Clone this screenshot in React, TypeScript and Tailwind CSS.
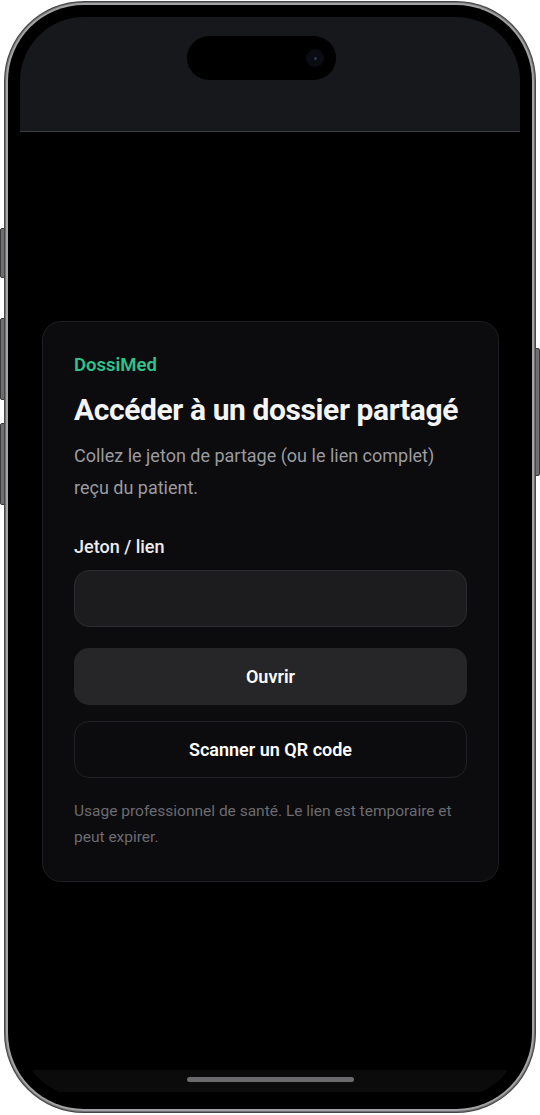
import React from "react";

export default function App() {
  return (
    <div className="relative w-[540px] h-[1115px] bg-white overflow-hidden" style={{ fontFamily: "Roboto, 'Noto Sans', sans-serif" }}>
      {/* side buttons */}
      <div className="absolute left-0 top-[228px] w-[6px] h-[50px] rounded-l-[2px] bg-[#6e6e70] border border-[#3a3a3a]" />
      <div className="absolute left-0 top-[318px] w-[6px] h-[82px] rounded-l-[2px] bg-[#6e6e70] border border-[#3a3a3a]" />
      <div className="absolute left-0 top-[423px] w-[6px] h-[82px] rounded-l-[2px] bg-[#6e6e70] border border-[#3a3a3a]" />
      <div className="absolute right-0 top-[348px] w-[6px] h-[128px] rounded-r-[2px] bg-[#6e6e70] border border-[#3a3a3a]" />

      <div className="relative mx-[4px] mt-[1px] h-[1112px] rounded-[80px] bg-[#444446] p-[1px]">
        <div className="h-full rounded-[79px] bg-[#707072] p-[1px]">
          <div className="h-full rounded-[78px] bg-[#a4a4a6] p-[2px]">
            <div className="h-full rounded-[76px] bg-black p-[12px]">
              <div className="h-full rounded-[64px] overflow-hidden bg-black flex flex-col">
                {/* status area */}
                <div className="h-[115px] shrink-0 bg-[#17181b] border-b border-[#3d3e42] flex items-start pl-[167px] pt-[19px]">
                  <div className="w-[149px] h-[44px] rounded-full bg-black flex items-center justify-end pr-[12px]">
                    <div className="w-[18px] h-[18px] rounded-full bg-[#0b0c12] flex items-center justify-center">
                      <div className="w-[3px] h-[3px] rounded-full bg-[#2a3558]" />
                    </div>
                  </div>
                </div>

                {/* content */}
                <div className="flex-1 flex items-center pl-[22px] pr-[21px]">
                  <div className="w-full rounded-[19px] border border-[#1f1f23] bg-[#0c0c0e] pl-[31px] pr-[31px] pt-[31px] pb-[31px]">
                    <div className="text-[18.5px] leading-[24px] font-semibold text-[#2fc28a]">DossiMed</div>
                    <h1 className="mt-[15px] text-[30px] leading-[36px] font-bold text-[#f4f4f5] tracking-[-0.4px]">Accéder à un dossier partagé</h1>
                    <p className="mt-[12px] text-[18px] leading-[32px] text-[#9b9ba0]">
                      Collez le jeton de partage (ou le lien complet) reçu du patient.
                    </p>
                    <div className="mt-[31px] text-[18px] leading-[24px] font-medium text-[#ececee]">Jeton / lien</div>
                    <div className="mt-[11px] h-[57px] rounded-[15px] border border-[#2c2c30] bg-[#1c1c1f]" />
                    <button className="mt-[21px] w-full h-[57px] rounded-[15px] bg-[#262629] text-[18px] font-semibold text-white">Ouvrir</button>
                    <button className="mt-[16px] w-full h-[57px] rounded-[15px] border border-[#222226] bg-transparent text-[18px] font-semibold text-white">Scanner un QR code</button>
                    <p className="mt-[20px] text-[15.5px] leading-[26px] text-[#6b6b70]">
                      Usage professionnel de santé. Le lien est temporaire et peut expirer.
                    </p>
                  </div>
                </div>

                {/* home indicator strip */}
                <div className="h-[22px] shrink-0 bg-[#0b0b0b] flex justify-center pt-[7px] mb-[5px]">
                  <div className="w-[167px] h-[5px] rounded-full bg-[#6b6b6d]" />
                </div>
              </div>
            </div>
          </div>
        </div>
      </div>
    </div>
  );
}
